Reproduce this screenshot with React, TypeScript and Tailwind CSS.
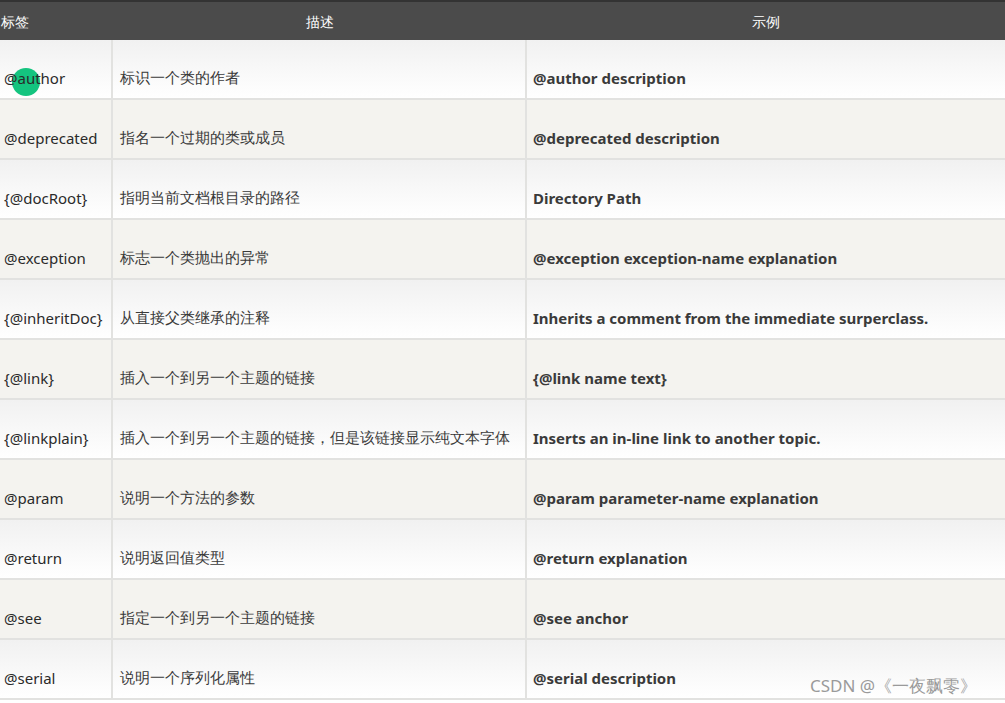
import React from "react";

const rows: [string, string, string][] = [
  ["@author", "标识一个类的作者", "@author description"],
  ["@deprecated", "指名一个过期的类或成员", "@deprecated description"],
  ["{@docRoot}", "指明当前文档根目录的路径", "Directory Path"],
  ["@exception", "标志一个类抛出的异常", "@exception exception-name explanation"],
  ["{@inheritDoc}", "从直接父类继承的注释", "Inherits a comment from the immediate surperclass."],
  ["{@link}", "插入一个到另一个主题的链接", "{@link name text}"],
  ["{@linkplain}", "插入一个到另一个主题的链接，但是该链接显示纯文本字体", "Inserts an in-line link to another topic."],
  ["@param", "说明一个方法的参数", "@param parameter-name explanation"],
  ["@return", "说明返回值类型", "@return explanation"],
  ["@see", "指定一个到另一个主题的链接", "@see anchor"],
  ["@serial", "说明一个序列化属性", "@serial description"],
];

export default function App() {
  return (
    <div className="relative w-[1005px] h-[703px] overflow-hidden bg-white text-[#333] [font-family:'Liberation_Sans','Noto_Sans_CJK_SC',sans-serif]">
      <div className="flex h-[40px] items-center bg-[#4b4b4b] border-t-2 border-[#333] text-[14px] text-white">
        <div className="w-[113px] pl-[1px]">标签</div>
        <div className="w-[414px] text-center">描述</div>
        <div className="flex-1 text-center">示例</div>
      </div>
      {rows.map(([tag, desc, ex], i) => (
        <div
          key={tag}
          className={`flex h-[60px] border-b-2 border-[#e2e2e0] ${
            i % 2 === 0 ? "bg-gradient-to-b from-[#f1f1f1] to-white" : "bg-[#f4f3ef]"
          }`}
        >
          <div className="relative w-[113px] flex items-end pb-[9px] pl-[4px] text-[15px] text-[#2a2a2a] border-r-2 border-[#e2e2e0]">
            {i === 0 && (
              <span className="absolute left-[12px] top-[28px] h-[28px] w-[28px] rounded-full bg-[#14c47f]" />
            )}
            <span className="relative">{tag}</span>
          </div>
          <div className="w-[414px] flex items-end pb-[10px] pl-[7px] text-[15px] text-[#3a3a3a] border-r-2 border-[#e2e2e0]">
            {desc}
          </div>
          <div className="flex-1 flex items-end pb-[9px] pl-[6px] text-[15px] font-bold text-[#3a3a3a]">
            {ex}
          </div>
        </div>
      ))}
      <div className="absolute left-[810px] top-[673px] text-[17px] text-[#9a9a9a]">
        CSDN @《一夜飘零》
      </div>
    </div>
  );
}
